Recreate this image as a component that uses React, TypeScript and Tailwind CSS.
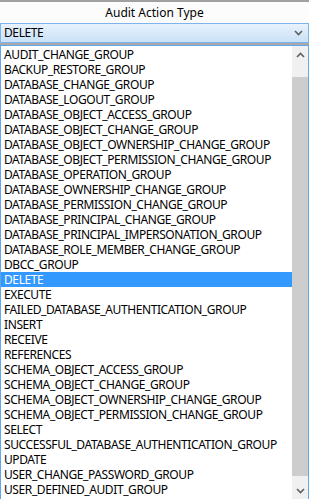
const items = [
  "AUDIT_CHANGE_GROUP",
  "BACKUP_RESTORE_GROUP",
  "DATABASE_CHANGE_GROUP",
  "DATABASE_LOGOUT_GROUP",
  "DATABASE_OBJECT_ACCESS_GROUP",
  "DATABASE_OBJECT_CHANGE_GROUP",
  "DATABASE_OBJECT_OWNERSHIP_CHANGE_GROUP",
  "DATABASE_OBJECT_PERMISSION_CHANGE_GROUP",
  "DATABASE_OPERATION_GROUP",
  "DATABASE_OWNERSHIP_CHANGE_GROUP",
  "DATABASE_PERMISSION_CHANGE_GROUP",
  "DATABASE_PRINCIPAL_CHANGE_GROUP",
  "DATABASE_PRINCIPAL_IMPERSONATION_GROUP",
  "DATABASE_ROLE_MEMBER_CHANGE_GROUP",
  "DBCC_GROUP",
  "DELETE",
  "EXECUTE",
  "FAILED_DATABASE_AUTHENTICATION_GROUP",
  "INSERT",
  "RECEIVE",
  "REFERENCES",
  "SCHEMA_OBJECT_ACCESS_GROUP",
  "SCHEMA_OBJECT_CHANGE_GROUP",
  "SCHEMA_OBJECT_OWNERSHIP_CHANGE_GROUP",
  "SCHEMA_OBJECT_PERMISSION_CHANGE_GROUP",
  "SELECT",
  "SUCCESSFUL_DATABASE_AUTHENTICATION_GROUP",
  "UPDATE",
  "USER_CHANGE_PASSWORD_GROUP",
  "USER_DEFINED_AUDIT_GROUP",
]

const selected = "DELETE"

const Chevron = ({ up = false, color = "#606060" }: { up?: boolean; color?: string }) => (
  <svg width="9" height="6" viewBox="0 0 9 6" className="block">
    <path
      d={up ? "M1 5 L4.5 1.5 L8 5" : "M1 1 L4.5 4.5 L8 1"}
      fill="none"
      stroke={color}
      strokeWidth="1.6"
    />
  </svg>
)

export default function App() {
  return (
    <div className="w-[309px] h-[499px] overflow-hidden bg-white text-black text-[12px] font-['Noto_Sans',sans-serif] flex flex-col">
      {/* column header */}
      <div className="h-[23px] shrink-0 border-t-2 border-[#a0a0a0] bg-[#fcfcfc] flex items-center justify-center">
        Audit Action Type
      </div>

      {/* combo box */}
      <div className="h-[20px] shrink-0 border border-[#7eb4ea] bg-gradient-to-b from-[#e8f2fc] to-[#c9e1f7] flex items-center justify-between pl-[3px] pr-[5px]">
        <span className="leading-[18px] tracking-[-0.4px]">{selected}</span>
        <Chevron />
      </div>
      <div className="h-[2px] shrink-0 bg-[#a9a9a9]" />

      {/* dropdown list */}
      <div className="flex-1 flex border-x border-t border-[#5fa7ef] min-h-0">
        <div className="flex-1 pt-[1px] tracking-[-0.4px] overflow-hidden">
          {items.map((it) => (
            <div
              key={it}
              className={
                "h-[15px] leading-[15px] pl-[3px] whitespace-nowrap " +
                (it === selected ? "bg-[#3399ff] text-white" : "")
              }
            >
              {it}
            </div>
          ))}
        </div>
        <div className="w-[16px] shrink-0 bg-[#f0f0f0] flex flex-col">
          <div className="h-[17px] flex items-center justify-center">
            <Chevron up />
          </div>
          <div className="flex-1 pt-[14px] pb-[6px]">
            <div className="h-full bg-[#cdcdcd]" />
          </div>
          <div className="h-[17px] flex items-center justify-center">
            <Chevron />
          </div>
        </div>
      </div>
    </div>
  )
}
